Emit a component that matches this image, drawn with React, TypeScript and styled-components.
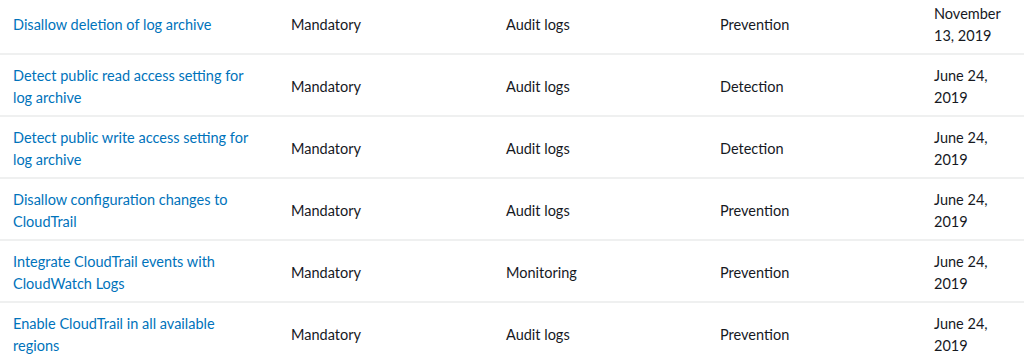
import React from "react";
import styled, { createGlobalStyle } from "styled-components";

const Global = createGlobalStyle`
  html, body { margin: 0; padding: 0; background: #ffffff; }
  body { overflow: hidden; width: 1024px; height: 362px; }
`;

const Table = styled.div`
  display: grid;
  grid-template-columns: 278px 215px 214px 214px 108px;
  margin-top: -7px;
  font-family: Lato, "Open Sans", sans-serif;
  font-size: 14.5px;
  line-height: 22px;
  color: #16191f;
  width: 1029px;
`;

const Row = styled.div<{ $first?: boolean }>`
  display: contents;
  & > div {
    border-top: ${(p) => (p.$first ? "0" : "2px solid #eff0f0")};
  }
`;

const Cell = styled.div`
  display: flex;
  align-items: center;
  padding: 10px 13px 6px 13px;
  min-height: 44px;
`;

const LinkText = styled.a`
  color: #0073bb;
  text-decoration: none;
  max-width: 240px;
`;

const DateText = styled.span`
  max-width: 80px;
`;

type R = { name: string; guidance: string; category: string; behavior: string; date: string };

const rows: R[] = [
  { name: "Disallow deletion of log archive", guidance: "Mandatory", category: "Audit logs", behavior: "Prevention", date: "November 13, 2019" },
  { name: "Detect public read access setting for log archive", guidance: "Mandatory", category: "Audit logs", behavior: "Detection", date: "June 24, 2019" },
  { name: "Detect public write access setting for log archive", guidance: "Mandatory", category: "Audit logs", behavior: "Detection", date: "June 24, 2019" },
  { name: "Disallow configuration changes to CloudTrail", guidance: "Mandatory", category: "Audit logs", behavior: "Prevention", date: "June 24, 2019" },
  { name: "Integrate CloudTrail events with CloudWatch Logs", guidance: "Mandatory", category: "Monitoring", behavior: "Prevention", date: "June 24, 2019" },
  { name: "Enable CloudTrail in all available regions", guidance: "Mandatory", category: "Audit logs", behavior: "Prevention", date: "June 24, 2019" },
];

export default function App() {
  return (
    <>
      <Global />
      <Table>
        {rows.map((r, i) => (
          <Row key={i} $first={i === 0}>
            <Cell><LinkText href="#">{r.name}</LinkText></Cell>
            <Cell>{r.guidance}</Cell>
            <Cell>{r.category}</Cell>
            <Cell>{r.behavior}</Cell>
            <Cell><DateText>{r.date}</DateText></Cell>
          </Row>
        ))}
      </Table>
    </>
  );
}
